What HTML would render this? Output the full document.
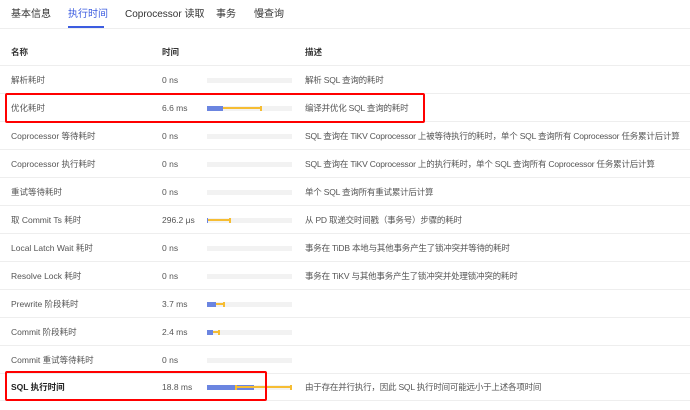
<!DOCTYPE html><html><head><meta charset="utf-8"><style>
body{margin:0;width:690px;height:410px;background:#fff;font-family:"Liberation Sans","Noto Sans CJK SC",sans-serif;overflow:hidden;position:relative;color:#555;font-size:8.5px}
.a{position:absolute;white-space:nowrap}
.tab{top:7px;font-size:10px;line-height:16px;color:#333}
.row{position:absolute;left:0;width:690px;height:27px;border-bottom:1px solid #eee}
.row span{position:absolute;top:0;height:28px;line-height:28px;white-space:nowrap}
.d{letter-spacing:-0.2px}
.bg{position:absolute;left:207px;width:85px;height:5px;top:12px;background:#f2f2f2}
.bl{position:absolute;left:207px;height:5px;top:12px;background:#6b85e0}
.yl{position:absolute;height:2px;top:13px;background:#f6bd33}
.tk{position:absolute;width:2px;height:5px;top:12px;background:#f6bd33}
.red{position:absolute;border:2px solid #f00;border-radius:2px}
</style></head><body>
<div class="a tab" style="left:11px">基本信息</div>
<div class="a tab" style="left:68px;color:#3c5ce0">执行时间</div>
<div class="a tab" style="left:125px">Coprocessor 读取</div>
<div class="a tab" style="left:216px">事务</div>
<div class="a tab" style="left:254px">慢查询</div>
<div class="a" style="left:68px;top:26px;width:36px;height:2px;background:#3c5ce0"></div>
<div class="a" style="left:0;top:28px;width:690px;height:1px;background:#eee"></div>
<div class="row" style="top:38px"><span style="left:11px;color:#333;font-weight:bold">名称</span><span style="left:162px;color:#333;font-weight:bold">时间</span><span style="left:305px;color:#333;font-weight:bold">描述</span></div>

<div class="row" style="top:66px"><span style="left:11px">解析耗时</span><span style="left:162px">0 ns</span><div class="bg"></div><span class="d" style="left:305px">解析 SQL 查询的耗时</span></div>
<div class="row" style="top:94px"><span style="left:11px">优化耗时</span><span style="left:162px">6.6 ms</span><div class="bg"></div><div class="bl" style="width:16px"></div><div class="yl" style="left:223px;width:38px"></div><div class="tk" style="left:260px"></div><span class="d" style="left:305px">编译并优化 SQL 查询的耗时</span></div>
<div class="row" style="top:122px"><span style="left:11px">Coprocessor 等待耗时</span><span style="left:162px">0 ns</span><div class="bg"></div><span class="d" style="left:305px">SQL 查询在 TiKV Coprocessor 上被等待执行的耗时，单个 SQL 查询所有 Coprocessor 任务累计后计算</span></div>
<div class="row" style="top:150px"><span style="left:11px">Coprocessor 执行耗时</span><span style="left:162px">0 ns</span><div class="bg"></div><span class="d" style="left:305px">SQL 查询在 TiKV Coprocessor 上的执行耗时，单个 SQL 查询所有 Coprocessor 任务累计后计算</span></div>
<div class="row" style="top:178px"><span style="left:11px">重试等待耗时</span><span style="left:162px">0 ns</span><div class="bg"></div><span class="d" style="left:305px">单个 SQL 查询所有重试累计后计算</span></div>
<div class="row" style="top:206px"><span style="left:11px">取 Commit Ts 耗时</span><span style="left:162px">296.2 μs</span><div class="bg"></div><div class="bl" style="width:1px"></div><div class="yl" style="left:208px;width:22px"></div><div class="tk" style="left:229px"></div><span class="d" style="left:305px">从 PD 取递交时间戳（事务号）步骤的耗时</span></div>
<div class="row" style="top:234px"><span style="left:11px">Local Latch Wait 耗时</span><span style="left:162px">0 ns</span><div class="bg"></div><span class="d" style="left:305px">事务在 TiDB 本地与其他事务产生了锁冲突并等待的耗时</span></div>
<div class="row" style="top:262px"><span style="left:11px">Resolve Lock 耗时</span><span style="left:162px">0 ns</span><div class="bg"></div><span class="d" style="left:305px">事务在 TiKV 与其他事务产生了锁冲突并处理锁冲突的耗时</span></div>
<div class="row" style="top:290px"><span style="left:11px">Prewrite 阶段耗时</span><span style="left:162px">3.7 ms</span><div class="bg"></div><div class="bl" style="width:9px"></div><div class="yl" style="left:216px;width:8px"></div><div class="tk" style="left:223px"></div></div>
<div class="row" style="top:318px"><span style="left:11px">Commit 阶段耗时</span><span style="left:162px">2.4 ms</span><div class="bg"></div><div class="bl" style="width:6px"></div><div class="yl" style="left:213px;width:6px"></div><div class="tk" style="left:218px"></div></div>
<div class="row" style="top:346px"><span style="left:11px">Commit 重试等待耗时</span><span style="left:162px">0 ns</span><div class="bg"></div></div>
<div class="row" style="top:373px"><span style="left:11px;color:#222;font-weight:bold">SQL 执行时间</span><span style="left:162px">18.8 ms</span><div class="bg"></div><div class="bl" style="width:47px"></div><div class="yl" style="left:235px;width:56px"></div><div class="tk" style="left:235px"></div><div class="tk" style="left:290px"></div><span class="d" style="left:305px">由于存在并行执行，因此 SQL 执行时间可能远小于上述各项时间</span></div>

<div class="red" style="left:5px;top:93px;width:416px;height:26px"></div>
<div class="red" style="left:5px;top:371px;width:258px;height:26px"></div>
</body></html>
